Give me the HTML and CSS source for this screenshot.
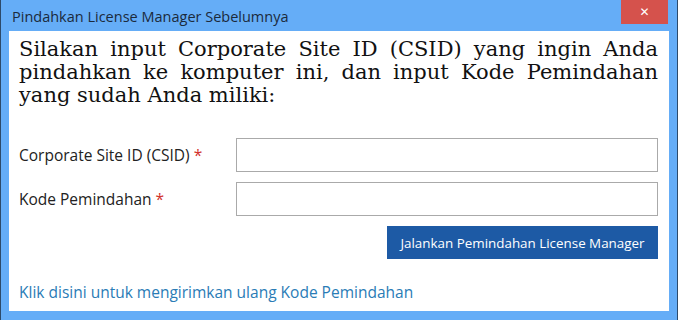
FILE: index.html
```html
<!DOCTYPE html>
<html lang="id">
<head>
  <meta charset="UTF-8" />
  <title>Pindahkan License Manager Sebelumnya</title>
  <link rel="stylesheet" href="styles.css">
</head>
<body>
  <div class="dialog">
    <div class="titlebar">
      <span class="title">Pindahkan License Manager Sebelumnya</span>
      <button type="button" class="close-btn" aria-label="Tutup">&#x2715;</button>
    </div>

    <div class="content">
      <p class="intro">Silakan input Corporate Site ID (CSID) yang ingin Anda pindahkan ke komputer ini, dan input Kode Pemindahan yang sudah Anda miliki:</p>

      <form class="move-form">
        <div class="form-row">
          <label for="csid">Corporate Site ID (CSID) <span class="req">*</span></label>
          <input type="text" id="csid" />
        </div>
        <div class="form-row">
          <label for="move-code">Kode Pemindahan <span class="req">*</span></label>
          <input type="text" id="move-code" />
        </div>
        <div class="actions">
          <button type="submit" class="submit-btn">Jalankan Pemindahan License Manager</button>
        </div>
      </form>

      <a href="#" class="resend-link">Klik disini untuk mengirimkan ulang Kode Pemindahan</a>
    </div>
  </div>
</body>
</html>
```

FILE: styles.css
```css
* {
  box-sizing: border-box;
  margin: 0;
  padding: 0;
}

body {
  font-family: 'Open Sans', 'Noto Sans', sans-serif;
  background: #65adf7;
  width: 678px;
  height: 320px;
  overflow: hidden;
}

.dialog {
  width: 678px;
  height: 320px;
  border-left: 1px solid #2d4a6a;
  border-right: 1px solid #2d4a6a;
  background: #65adf7;
}

/* Title bar */
.titlebar {
  display: flex;
  align-items: flex-start;
  height: 31px;
  padding-left: 11px;
}

.title {
  font-size: 14.5px;
  color: #1b2a3c;
  line-height: 33px;
}

.close-btn {
  margin-left: auto;
  margin-right: 9px;
  width: 47px;
  height: 24px;
  border: none;
  background: #d5524c;
  color: #fff;
  font-size: 12px;
  font-weight: 700;
  font-family: 'DejaVu Sans', sans-serif;
  line-height: 24px;
  cursor: pointer;
}

/* White panel */
.content {
  margin: 0 8px;
  height: 280px;
  background: #fff;
  padding: 7px 11px 0 10px;
}

.intro {
  font-family: 'DejaVu Serif', serif;
  font-size: 21px;
  line-height: 23px;
  color: #111;
  text-align: justify;
  margin-bottom: 31px;
}

.form-row {
  display: flex;
  align-items: center;
  margin-bottom: 10px;
}

label {
  width: 217px;
  font-size: 15.5px;
  color: #222;
}

.req {
  color: #d2322d;
}

input {
  flex: 1;
  height: 34px;
  border: 1px solid #aaa;
  padding: 0 8px;
  font-size: 14px;
}

input:focus {
  outline: none;
  border-color: #1d5ba6;
}

.actions {
  display: flex;
  justify-content: flex-end;
}

.submit-btn {
  width: 271px;
  height: 33px;
  border: none;
  background: #1d5aa5;
  color: #fff;
  font-family: 'Open Sans', sans-serif;
  font-size: 13.4px;
  cursor: pointer;
}

.resend-link {
  display: block;
  margin-top: 22px;
  font-size: 15.5px;
  color: #2a7cb6;
  text-decoration: none;
}
```
